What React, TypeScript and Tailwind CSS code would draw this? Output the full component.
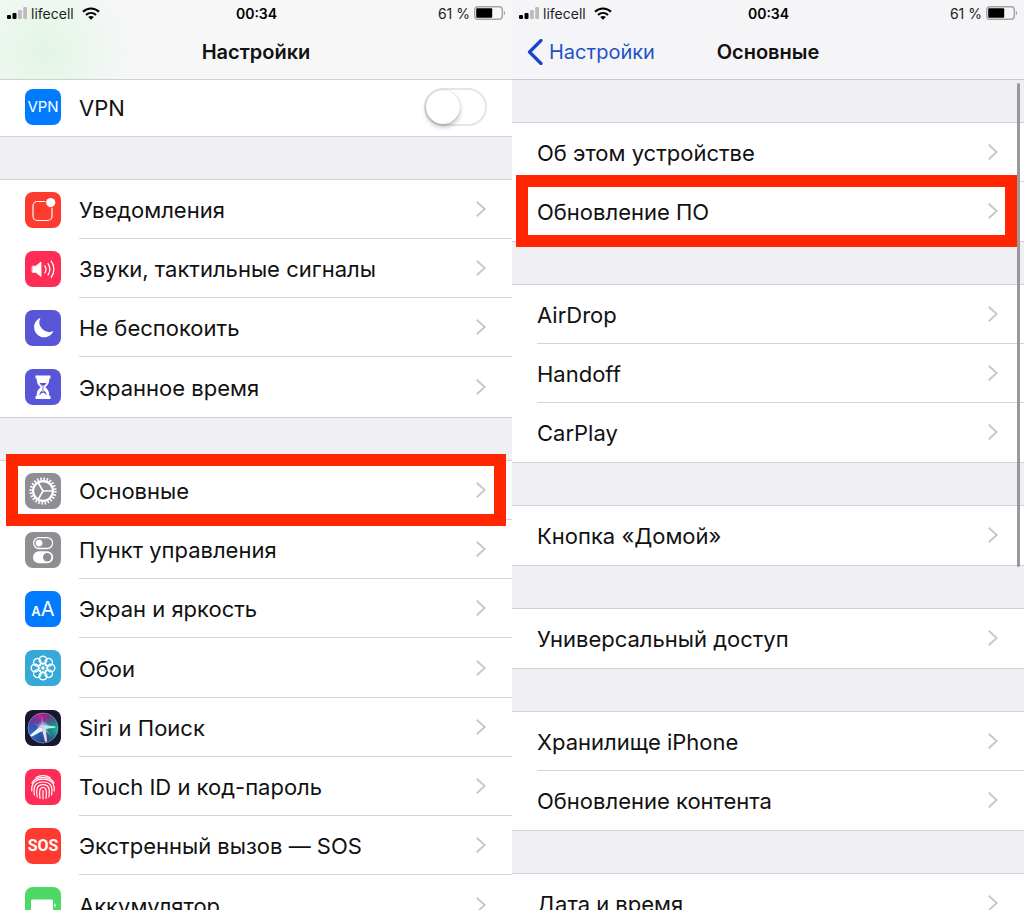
import type { ReactNode } from 'react';
import clsx from 'clsx';

type RowItem = {
  label: string;
  icon?: ReactNode;
  tile?: string;
  highlight?: string;
};

const svgProps = {
  viewBox: '0 0 36 36',
  className: 'size-9',
  fill: 'none',
  'aria-hidden': true,
} as const;

const NotificationsIcon = () => (
  <svg {...svgProps}>
    <rect x="8" y="9.5" width="19" height="19" rx="4.5" stroke="#fff" strokeWidth="1.2" />
    <circle cx="25.7" cy="10.6" r="5.6" fill="#ff3b30" />
    <circle cx="25.7" cy="10.6" r="4.6" fill="#fff" />
  </svg>
);

const SoundsIcon = () => (
  <svg {...svgProps} stroke="#fff" strokeLinecap="round">
    <path d="M7.5 15.2h3.2l5.3-4.200v14.500l-5.300-4.200H7.500z" fill="#fff" strokeWidth=".8" strokeLinejoin="round" />
    <path d="M19.800 14.800c1.400 2 1.400 5 0 7" strokeWidth="1.300" />
    <path d="M23 12.600c2.500 3.300 2.500 8.100 0 11.400" strokeWidth="1.300" />
    <path d="M26.200 10.200c3.600 4.800 3.600 11.400 0 16.200" strokeWidth="1.300" />
  </svg>
);

const MoonIcon = () => (
  <svg {...svgProps}>
    <path d="M15.500 7.800a10.100 10.100 0 1 0 13 13.200A9.800 9.800 0 0 1 15.500 7.800z" fill="#fff" />
  </svg>
);

const HourglassIcon = () => (
  <svg {...svgProps}>
    <path
      d="M10.500 6.500h15v3h-1.200c0 4.600-1.300 6.500-4.100 8.700 2.800 2.200 4.100 4.100 4.100 8.700h1.200v3h-15v-3h1.200c0-4.600 1.300-6.500 4.100-8.700-2.800-2.200-4.100-4.100-4.100-8.700h-1.200z"
      fill="#fff"
    />
    <path d="M14.600 14h6.800c-.7 1.500-1.600 2.400-2.700 3.200v4.400c1.400.8 2.400 2 3 4.400h-7.400c.6-2.400 1.600-3.600 3-4.400v-4.400c-1.100-.8-2-1.700-2.700-3.200z" fill="#5856d6" />
    <path d="M14.800 26.500c.6-1.500 1.600-2.400 3.200-2.700 1.600.3 2.600 1.200 3.200 2.700z" fill="#fff" />
    <path d="M18 16v7" stroke="#fff" strokeWidth=".8" />
  </svg>
);

const GearIcon = () => (
  <svg {...svgProps} stroke="#fff">
    <circle cx="18" cy="18" r="12.200" strokeWidth="2.800" strokeDasharray="1.594 1.600" />
    <circle cx="18" cy="18" r="9.900" strokeWidth="2.200" />
    <path d="M18 18h9.500M18 18l-4.800-8.300M18 18l-4.800 8.300" strokeWidth="1.700" />
  </svg>
);

const ControlCenterIcon = () => (
  <svg {...svgProps}>
    <rect x="8.600" y="5.700" width="19" height="10.800" rx="5.400" stroke="#fff" strokeWidth="1.300" />
    <circle cx="14" cy="11.100" r="3.400" fill="#fff" />
    <rect x="8" y="19.300" width="20.200" height="12" rx="6" fill="#fff" />
    <circle cx="22.200" cy="25.300" r="4.200" fill="#8e8e93" />
  </svg>
);

const FLOWER = [0, 45, 90, 135, 180, 225, 270, 315];

const WallpaperIcon = () => (
  <svg {...svgProps} stroke="#fff" strokeWidth="1.400">
    {FLOWER.map((angle) => (
      <g key={angle} transform={`rotate(${angle} 18 18)`}>
        <circle cx="18" cy="10" r="3.800" />
        <path d="M18 13.500v1.800" strokeWidth="1" />
      </g>
    ))}
    <circle cx="18" cy="18" r="4.800" strokeWidth="1.200" />
    <circle cx="18" cy="18" r="1.700" fill="#fff" stroke="none" />
  </svg>
);

const SiriIcon = () => (
  <svg {...svgProps}>
    <defs>
      <radialGradient id="siri-pink" cx=".4" cy=".1" r=".65">
        <stop stopColor="#c0208f" />
        <stop offset="1" stopColor="#c0208f" stopOpacity="0" />
      </radialGradient>
      <radialGradient id="siri-teal" cx=".95" cy=".55" r=".6">
        <stop stopColor="#12b59b" />
        <stop offset="1" stopColor="#12b59b" stopOpacity="0" />
      </radialGradient>
      <radialGradient id="siri-blue" cx=".1" cy=".7" r=".7">
        <stop stopColor="#2b6fd6" />
        <stop offset="1" stopColor="#2b6fd6" stopOpacity="0" />
      </radialGradient>
      <radialGradient id="siri-glow">
        <stop stopColor="#fff" />
        <stop offset="1" stopColor="#9fe8ff" stopOpacity="0" />
      </radialGradient>
    </defs>
    <circle cx="18" cy="18" r="15" fill="#2b2a63" />
    <circle cx="18" cy="18" r="15" fill="url(#siri-pink)" />
    <circle cx="18" cy="18" r="15" fill="url(#siri-teal)" />
    <circle cx="18" cy="18" r="15" fill="url(#siri-blue)" />
    <circle cx="18" cy="18" r="15" stroke="#b9a9dc" strokeOpacity=".7" strokeWidth=".8" />
    <circle cx="18" cy="17" r="6.500" fill="url(#siri-glow)" />
    <path d="M17 14.800 5 25.200c1 1 1.500 1.300 2 1.200l12-6.400z" fill="#e6fbff" />
    <path d="M16.500 17l3.600 14.800 2-.4L20.500 17z" fill="#fbd0f0" />
    <path d="M19 15l11.500 1.400-.3 1.400L19 19z" fill="#a8f5e8" />
    <path d="M17 17 16.500 6l3 10z" fill="#e58be0" fillOpacity=".6" />
    <path d="M18 16l9 10-10-7z" fill="#8fd8f0" fillOpacity=".5" />
    <path d="M18 17 8 12.500l8 6z" fill="#b48bf0" fillOpacity=".5" />
  </svg>
);

const FingerprintIcon = () => (
  <svg {...svgProps} stroke="#fff" strokeWidth="1.200" strokeLinecap="round">
    <path d="M11 8.600C15 6 21 6 25 8.600" />
    <path d="M7 14.200C10 6.800 26 6.800 29 14.200" />
    <path d="M6.800 22c-.8-8 4-11.800 11.200-11.800S30 14 29.200 22" />
    <path d="M9.400 25.800c-1.400-8 .8-12.800 8.600-12.800s10 4.800 8.600 12.800" />
    <path d="M12.200 28c-1.200-7.500-.6-12.300 5.800-12.300s7 4.800 5.800 12.300" />
    <path d="M15 29.400c-.8-7-.6-10.900 3-10.900s3.800 3.900 3 10.900" />
    <path d="M18 21.500v8.300" />
  </svg>
);

const BatteryTileIcon = () => (
  <svg {...svgProps} fill="#fff">
    <rect x="6" y="12.500" width="22" height="11.500" rx="1.500" />
    <path d="M29.300 16.200c2 .6 2 3.500 0 4.100z" />
  </svg>
);

const Chevron = () => (
  <svg viewBox="0 0 12 18" className="mr-px h-[18px] w-3 shrink-0" fill="none" aria-hidden>
    <path d="M1.700 1.800 9.700 9l-8 7.200" stroke="#c7c7cc" strokeWidth="1.900" />
  </svg>
);

const alerts: RowItem[] = [
  { label: 'Уведомления', tile: 'bg-[#ff3b30]', icon: <NotificationsIcon /> },
  { label: 'Звуки, тактильные сигналы', tile: 'bg-[#ff2d55]', icon: <SoundsIcon /> },
  { label: 'Не беспокоить', tile: 'bg-[#5856d6]', icon: <MoonIcon /> },
  { label: 'Экранное время', tile: 'bg-[#5856d6]', icon: <HourglassIcon /> },
];

const system: RowItem[] = [
  { label: 'Основные', tile: 'bg-[#8e8e93]', icon: <GearIcon />, highlight: 'inset-x-1.5' },
  { label: 'Пункт управления', tile: 'bg-[#8e8e93]', icon: <ControlCenterIcon /> },
  {
    label: 'Экран и яркость',
    tile: 'bg-[#007aff]',
    icon: (
      <span className="flex items-baseline leading-none text-white">
        <span className="text-[13px] font-semibold">A</span>
        <span className="text-[20px]">A</span>
      </span>
    ),
  },
  { label: 'Обои', tile: 'bg-[#36a9d8]', icon: <WallpaperIcon /> },
  { label: 'Siri и Поиск', tile: 'bg-[#16182e]', icon: <SiriIcon /> },
  { label: 'Touch ID и код-пароль', tile: 'bg-[#ff2d55]', icon: <FingerprintIcon /> },
  {
    label: 'Экстренный вызов — SOS',
    tile: 'bg-[#ff3b30]',
    icon: <span className="font-['Roboto',sans-serif] text-[16px] font-bold text-white">SOS</span>,
  },
  { label: 'Аккумулятор', tile: 'bg-[#4cd964]', icon: <BatteryTileIcon /> },
];

const generalGroups: RowItem[][] = [
  [{ label: 'Об этом устройстве' }, { label: 'Обновление ПО', highlight: 'left-1 right-[7px]' }],
  [{ label: 'AirDrop' }, { label: 'Handoff' }, { label: 'CarPlay' }],
  [{ label: 'Кнопка «Домой»' }],
  [{ label: 'Универсальный доступ' }],
  [{ label: 'Хранилище iPhone' }, { label: 'Обновление контента' }],
  [{ label: 'Дата и время' }],
];

function StatusBar() {
  return (
    <div className="grid h-6 grid-cols-3 items-center pt-0.5 pr-1.5 pl-[7px] text-[14px] text-[#222]">
      <div className="flex items-center gap-1">
        <svg viewBox="0 0 20 12" className="h-3 w-5" aria-hidden>
          <rect y="8" width="4" height="4" rx="1" />
          <rect x="5.500" y="6" width="4" height="6" rx="1" />
          <rect x="11" y="3" width="3.800" height="9" rx="1" fill="#bcbcbe" />
          <rect x="16.200" width="3.800" height="12" rx="1" fill="#bcbcbe" />
        </svg>
        <span>lifecell</span>
        <svg viewBox="0 0 18 13" className="ml-1 h-[13px] w-[18px]" fill="none" stroke="#000" strokeWidth="2.200" aria-hidden>
          <path d="M1 4.800c4.600-4.400 11.400-4.400 16 0" />
          <path d="M4 8c2.900-2.700 7.100-2.700 10 0" />
          <path d="M9 12.800 6.200 10c1.700-1.400 3.900-1.400 5.600 0z" fill="#000" stroke="none" />
        </svg>
      </div>
      <time className="text-center font-semibold text-black">00:34</time>
      <div className="flex items-center justify-end gap-1">
        <span>61 %</span>
        <svg viewBox="0 0 32 14" className="h-3.5 w-8" fill="none" aria-hidden>
          <rect x=".7" y=".7" width="27.600" height="12.600" rx="3" stroke="#a5a5a8" strokeWidth="1.400" />
          <rect x="2.200" y="2.200" width="16" height="9.600" rx="1" fill="#000" />
          <path d="M29.800 4.800c1.800.6 1.800 3.800 0 4.400z" fill="#a5a5a8" />
        </svg>
      </div>
    </div>
  );
}

function Tile({ className, children }: { className?: string; children: ReactNode }) {
  return (
    <span className={clsx('flex size-9 shrink-0 items-center justify-center overflow-hidden rounded-lg', className)}>
      {children}
    </span>
  );
}

function Row({ label, icon, tile, highlight }: RowItem) {
  return (
    <li className="group relative h-[59px] nth-[4n]:h-15">
      <a href="#" className="flex h-full items-center pl-[25px]">
        {icon && <Tile className={clsx('mr-[18px]', tile)}>{icon}</Tile>}
        <span className="flex h-full min-w-0 grow items-center justify-between border-b border-[#d4d4d8] pr-6 group-last:border-transparent">
          <span className="truncate pt-[3px]">{label}</span>
          <Chevron />
        </span>
      </a>
      {highlight && (
        <span className={clsx('pointer-events-none absolute -top-[7px] -bottom-1.5 z-10 border-12 border-[#ff2600]', highlight)} />
      )}
    </li>
  );
}

function Group({ items }: { items: RowItem[] }) {
  return (
    <ul className="bg-white shadow-[0_-1px_0_#d0d0d6,0_1px_0_#d0d0d6]">
      {items.map((item) => (
        <Row key={item.label} {...item} />
      ))}
    </ul>
  );
}

function SettingsScreen() {
  return (
    <section className="flex min-w-0 flex-1 flex-col">
      <header className="h-20 border-b border-[#d0d0d4] bg-[#f7f7f8] bg-[radial-gradient(circle_at_44px_52px,#e3f5e6_0,#e9f6eb_30px,transparent_90px)]">
        <StatusBar />
        <h1 className="flex h-14 items-center justify-center text-[20px] font-semibold">Настройки</h1>
      </header>
      <div className="flex flex-col gap-11">
        <div className="flex h-14 items-center bg-white pr-[25px] pb-0.5 pl-[25px] shadow-[0_1px_0_#d0d0d6]">
          <Tile className="mr-[18px] bg-[#007aff] text-[15px] text-white">VPN</Tile>
          <label htmlFor="vpn" className="grow pt-0.5">
            VPN
          </label>
          <input
            id="vpn"
            type="checkbox"
            role="switch"
            className="flex h-[38px] w-[63px] appearance-none items-center rounded-full border-2 border-[#e5e5e5] bg-white before:size-[34px] before:rounded-full before:bg-white before:shadow-[0_3px_5px_rgba(0,0,0,0.25),0_0_1px_rgba(0,0,0,0.3)] checked:bg-[#4cd964] checked:before:ml-auto"
          />
        </div>
        <Group items={alerts} />
        <Group items={system} />
      </div>
    </section>
  );
}

function GeneralScreen() {
  return (
    <section className="relative flex min-w-0 flex-1 flex-col">
      <header className="h-20 border-b border-[#c8c8d0] bg-[#f5f5f8]">
        <StatusBar />
        <div className="grid h-14 grid-cols-[1fr_auto_1fr] items-center text-[20px]">
          <a href="#" className="flex items-center gap-1.5 pl-[15px] text-[#1f52c4]">
            <svg viewBox="0 0 16 26" className="h-[26px] w-4" fill="none" aria-hidden>
              <path d="M14 1.500 2.500 13 14 24.500" stroke="#1646c8" strokeWidth="3.200" strokeLinecap="round" strokeLinejoin="round" />
            </svg>
            Настройки
          </a>
          <h1 className="font-semibold">Основные</h1>
        </div>
      </header>
      <div className="flex flex-col gap-11 pt-[43px]">
        {generalGroups.map((items) => (
          <Group key={items[0].label} items={items} />
        ))}
      </div>
      <div className="absolute top-[83px] right-1 h-[484px] w-[3px] rounded-full bg-[#98989d]" />
    </section>
  );
}

export default function App() {
  return (
    <main className="flex h-screen overflow-hidden bg-[#efeff4] font-['Inter','Liberation_Sans',sans-serif] text-[22px] text-[#111]">
      <SettingsScreen />
      <GeneralScreen />
    </main>
  );
}
